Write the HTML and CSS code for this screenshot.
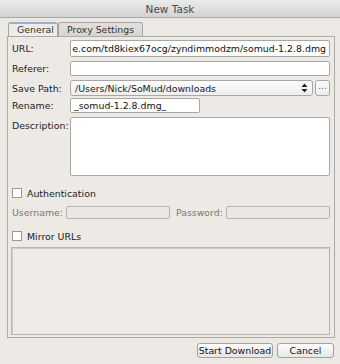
FILE: index.html
```html
<!doctype html>
<html lang="en">
<head>
    <meta charset="utf-8">
    <title>New Task</title>
    <link rel="stylesheet" href="styles.css">
</head>
<body>
<div class="window">
    <div class="titlebar">New Task</div>
    <div class="content">
        <div class="tabs">
            <div class="tab active">General</div>
            <div class="tab">Proxy Settings</div>
        </div>
        <div class="panel">
            <div class="row">
                <label class="lbl">URL:</label>
                <div class="field url"><span>e.com/td8kiex67ocg/zyndimmodzm/somud-1.2.8.dmg</span></div>
            </div>
            <div class="row">
                <label class="lbl">Referer:</label>
                <div class="field"></div>
            </div>
            <div class="row path">
                <label class="lbl">Save Path:</label>
                <div class="combo">
                    <span>/Users/Nick/SoMud/downloads</span>
                    <svg width="7" height="10" viewBox="0 0 7 10"><path d="M3.5 0.5 L6.5 4 H0.5 Z M3.5 9.5 L6.5 6 H0.5 Z" fill="#222"/></svg>
                </div>
                <div class="dots">...</div>
            </div>
            <div class="row">
                <label class="lbl">Rename:</label>
                <div class="field rename">_somud-1.2.8.dmg_</div>
            </div>
            <div class="row top">
                <label class="lbl">Description:</label>
                <div class="field area"></div>
            </div>

            <div class="check-row auth">
                <span class="box"></span>
                <span>Authentication</span>
            </div>
            <div class="cred-row">
                <label class="dim">Username:</label>
                <div class="field off user"></div>
                <label class="dim pw">Password:</label>
                <div class="field off pass"></div>
            </div>
            <div class="check-row mirror">
                <span class="box"></span>
                <span>Mirror URLs</span>
            </div>
            <div class="mirror-box"></div>
        </div>
        <div class="actions">
            <button class="btn start">Start Download</button>
            <button class="btn cancel">Cancel</button>
        </div>
    </div>
</div>
</body>
</html>
```

FILE: styles.css
```css
body {
    margin: 0;
    font-family: "DejaVu Sans", "Liberation Sans", sans-serif;
    font-size: 9.4px;
    color: #1a1a1a;
}
.window {
    width: 340px;
    height: 364px;
    background-color: #ece9e5;
    overflow: hidden;
    position: relative;
}
.titlebar {
    height: 18px;
    line-height: 18px;
    text-align: center;
    font-size: 10.5px;
    color: #4a4a4a;
    background: linear-gradient(#ebebeb, #d3d3d3);
    border-bottom: 1px solid #a9a9a9;
    box-sizing: border-box;
}
.content {
    padding: 4px 5px 0 7px;
}
.tabs {
    display: flex;
    padding-left: 1px;
    height: 14px;
}
.tab {
    padding: 0 8px;
    line-height: 13px;
    border: 1px solid #a8a6a2;
    border-bottom: none;
    border-radius: 3px 3px 0 0;
    background: linear-gradient(#e4e1dd, #d8d5d1);
    color: #333;
}
.tab.active {
    background: #efece8;
    border-top: 2px solid #8eb3d8;
    line-height: 12px;
    padding: 0 8px;
    width: 32px;
}
.panel {
    width: 328px;
    height: 302px;
    box-sizing: border-box;
    border: 1px solid #aeaba7;
    background-color: #edeae6;
    padding: 3px 4px 0 4px;
}
.row {
    display: flex;
    align-items: center;
    margin-bottom: 4px;
}
.row.path {
    margin-bottom: 2px;
}
.row.top {
    align-items: flex-start;
}
.lbl {
    width: 58px;
    flex: none;
    color: #222;
}
.row.top .lbl {
    padding-top: 3px;
}
.field {
    flex: 1;
    height: 15px;
    box-sizing: border-box;
    background: white;
    border: 1px solid #a9a7a3;
    border-radius: 2px;
    padding: 0 3px;
    line-height: 13px;
    overflow: hidden;
    white-space: nowrap;
    color: #111;
}
.field.url {
    height: 17px;
    line-height: 15px;
    display: flex;
    justify-content: flex-end;
}
.field.rename {
    flex: none;
    width: 130px;
}
.field.area {
    height: 59px;
}
.combo {
    flex: 1;
    height: 16px;
    box-sizing: border-box;
    border: 1px solid #a9a7a3;
    border-radius: 3px;
    background: linear-gradient(#fcfcfc, #eeeeee);
    display: flex;
    align-items: center;
    justify-content: space-between;
    padding: 0 4px 0 4px;
}
.dots {
    width: 15px;
    height: 16px;
    box-sizing: border-box;
    margin-left: 2px;
    border: 1px solid #a9a7a3;
    border-radius: 3px;
    background: linear-gradient(#fbfbfb, #ececec);
    text-align: center;
    line-height: 11px;
    font-size: 9px;
    color: #555;
}
.check-row {
    display: flex;
    align-items: center;
    height: 14px;
}
.check-row.auth {
    margin-top: 10px;
}
.check-row.mirror {
    margin-top: 10px;
}
.box {
    width: 8px;
    height: 8px;
    border: 1px solid #9b9995;
    background: white;
    margin-right: 5px;
}
.cred-row {
    display: flex;
    align-items: center;
    margin-top: 6px;
}
.dim {
    color: #7a7875;
}
.field.off {
    background: #ebe8e4;
    border-color: #b7b4b0;
    height: 13px;
}
.field.user {
    flex: none;
    width: 104px;
    margin-left: 3px;
}
.pw {
    margin-left: 6px;
}
.field.pass {
    margin-left: 3px;
}
.mirror-box {
    margin-top: 4px;
    margin-left: -1px;
    height: 86px;
    border: 1px solid #b8b5b1;
    background-color: #efece8;
    box-shadow: inset 1px 1px 0 #d0cdc9;
}
.actions {
    display: flex;
    justify-content: flex-end;
    gap: 4px;
    margin-top: 5px;
    padding-right: 1px;
}
.btn {
    font-family: "DejaVu Sans", "Liberation Sans", sans-serif;
    font-size: 9.4px;
    height: 15px;
    padding: 0;
    white-space: nowrap;
    border: 1px solid #a4a29e;
    border-radius: 3px;
    background: linear-gradient(#fdfdfd, #e6e6e6);
    color: #111;
    line-height: 12px;
}
.btn.start {
    width: 76px;
}
.btn.cancel {
    width: 57px;
}
```
